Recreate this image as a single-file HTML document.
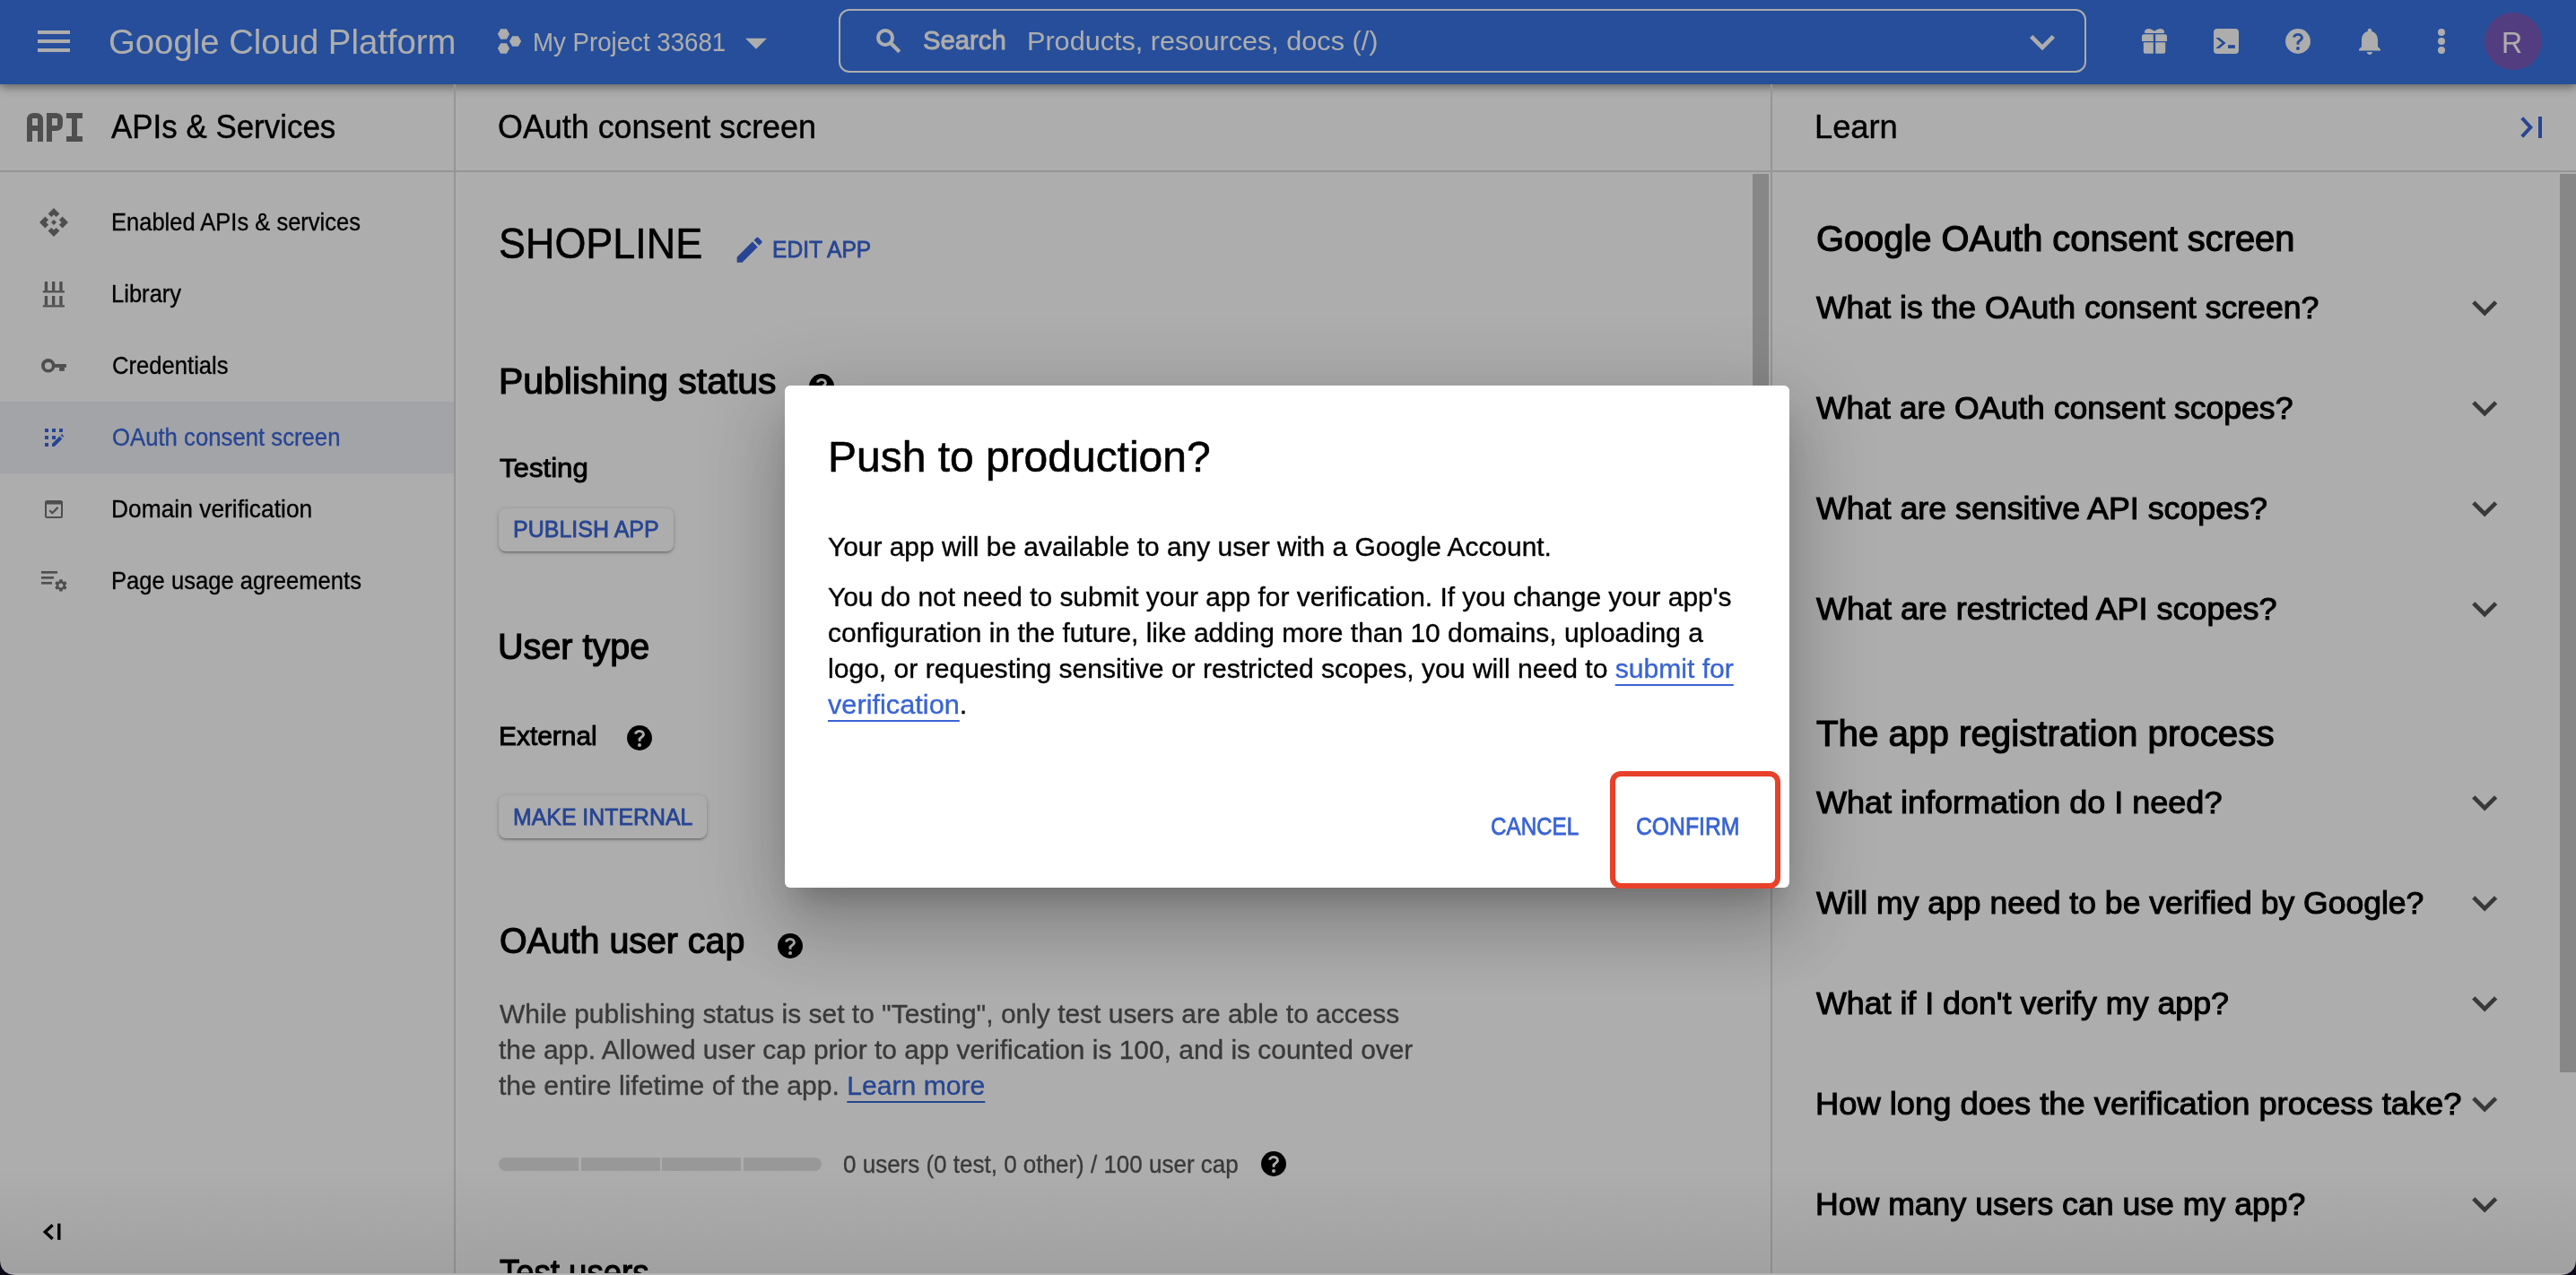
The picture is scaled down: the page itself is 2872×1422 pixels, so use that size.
<!DOCTYPE html>
<html><head><meta charset="utf-8"><style>
html,body{margin:0;padding:0;width:2872px;height:1422px;overflow:hidden;background:#fff;}
body{position:relative;font-family:"Liberation Sans",sans-serif;}
.t{position:absolute;white-space:nowrap;transform-origin:0 50%;}
.ic{position:absolute;overflow:visible;}
.bar{position:absolute;}
#hdr{position:absolute;left:0;top:0;width:2872px;height:94px;background:#3874e4;box-shadow:0 3px 10px rgba(0,0,0,0.45);z-index:0}
#sbox{position:absolute;left:935.4px;top:10.4px;width:1390.6px;height:71px;box-sizing:border-box;border:2.2px solid #ffffff;border-radius:12px;}
.btn{position:absolute;background:#fff;border-radius:8px;box-shadow:0 2px 2px rgba(0,0,0,0.14),0 3px 1px -2px rgba(0,0,0,0.12),0 1px 5px rgba(0,0,0,0.2);}
.lk{color:#3a66d8;-webkit-text-stroke-color:#3a66d8;text-decoration:underline;text-decoration-thickness:2px;text-underline-offset:7px;}
.lk2{color:#3a64d4;-webkit-text-stroke-color:#3a64d4;text-decoration:underline;text-decoration-thickness:2px;text-underline-offset:7px;}
#scrim{position:absolute;left:0;top:0;width:2872px;height:1422px;background:rgba(0,0,0,0.32);}
#dlg{position:absolute;left:875px;top:430px;width:1120px;height:560px;background:#fff;border-radius:6px;
 box-shadow:0 22px 30px -14px rgba(0,0,0,.2),0 48px 76px 6px rgba(0,0,0,.14),0 18px 92px 16px rgba(0,0,0,.12);}
#vig{position:absolute;left:0;top:1300px;width:2872px;height:120px;background:linear-gradient(to bottom,rgba(0,0,0,0),rgba(0,0,0,0.07));}
#strip{position:absolute;left:0;top:1420px;width:2872px;height:2px;background:#b4b4b4;}
#corners{position:absolute;left:0;top:0;}
#redbox{position:absolute;left:1795px;top:859.6px;width:189.7px;height:131px;box-sizing:border-box;border:6px solid #e8412a;border-radius:12px;}
</style></head><body>
<div id="page">
<div id="hdr"></div>
<div class="bar" style="left:42px;top:34px;width:36px;height:4px;background:#fff"></div>
<div class="bar" style="left:42px;top:44px;width:36px;height:4px;background:#fff"></div>
<div class="bar" style="left:42px;top:54px;width:36px;height:4px;background:#fff"></div>
<svg class="ic" style="left:550px;top:28px;width:36px;height:36px" viewBox="550 28 36 36"><polygon fill="#fff" points="568.10,38.00 564.80,43.72 558.20,43.72 554.90,38.00 558.20,32.28 564.80,32.28"/><polygon fill="#fff" points="581.10,46.00 577.80,51.72 571.20,51.72 567.90,46.00 571.20,40.28 577.80,40.28"/><polygon fill="#fff" points="568.10,54.00 564.80,59.72 558.20,59.72 554.90,54.00 558.20,48.28 564.80,48.28"/></svg>
<svg class="ic" style="left:828px;top:40px;width:30px;height:18px" viewBox="828 40 30 18"><polygon fill="#fff" points="831,42.8 855,42.8 843,54.8"/></svg>
<div id="sbox"></div>
<svg class="ic" style="left:970px;top:26px;width:40px;height:40px" viewBox="970 26 40 40"><g stroke="#fff" fill="none"><circle cx="987" cy="42" r="8" stroke-width="4"/><path d="M992.5 47.5L1002.8 57.8" stroke-width="4.2"/></g></svg>
<svg class="ic" style="left:2249.0px;top:18.5px;width:56.0px;height:56.0px" viewBox="0 0 24 24"><path fill="#fff" d="M16.59 8.59L12 13.17 7.41 8.59 6 10l6 6 6-6z"/></svg>
<svg class="ic" style="left:2380px;top:26px;width:44px;height:40px" viewBox="2380 26 44 40"><path fill="#fff" d="M2391 35.5c0-2.2 2.2-3.5 4.5-3.5 2.3 0 4.5 1.5 6.5 2.8 2-1.3 4.2-2.8 6.5-2.8 2.3 0 4.5 1.3 4.5 3.5 0 1.2-.5 1.5-1 1.5h-20c-.5 0-1-.3-1-1.5z"/><path fill="#fff" d="M2388 45.9V40.8Q2388 38.3 2390.5 38.3H2400.8V45.9Z"/><path fill="#fff" d="M2403.2 38.3H2413.5Q2416 38.3 2416 40.8V45.9H2403.2Z"/><path fill="#fff" d="M2389.8 47.2h11v12.5h-9c-1.1 0-2-.9-2-2z"/><path fill="#fff" d="M2403.2 47.2h11v10.5c0 1.1-.9 2-2 2h-9z"/></svg>
<svg class="ic" style="left:2464px;top:28px;width:36px;height:36px" viewBox="2464 28 36 36"><rect fill="#fff" x="2468" y="32" width="28" height="28" rx="4"/><polygon fill="#3a6ed8" points="2470.2,41.9 2474.2,41.9 2481.6,47.9 2474.2,53.9 2470.2,53.9 2477.4,47.9"/><rect fill="#3a6ed8" x="2484" y="50.2" width="7.9" height="3.7"/></svg>
<svg class="ic" style="left:2548.0px;top:32.0px;width:28px;height:28px" viewBox="-14 -14 28 28"><defs><mask id="hm1" maskUnits="userSpaceOnUse" x="-14" y="-14" width="28" height="28"><rect x="-14" y="-14" width="28" height="28" fill="#fff"/><path d="M-4.45 -4.3A4.45 3.5 0 1 1 3.75 -2.2L0.05 1.2V3.7" fill="none" stroke="#000" stroke-width="2.9"/><circle cx="0" cy="8" r="2.05" fill="#000"/></mask></defs><circle cx="0" cy="0" r="13.95" fill="#fff" mask="url(#hm1)"/></svg>
<svg class="ic" style="left:2624px;top:28.25px;width:36px;height:36px" viewBox="0 0 24 24"><path fill="#fff" d="M12 22c1.1 0 2-.9 2-2h-4c0 1.1.89 2 2 2zm6-6v-5c0-3.07-1.64-5.64-4.5-6.32V4c0-.83-.67-1.5-1.5-1.5s-1.5.67-1.5 1.5v.68C7.63 5.36 6 7.92 6 11v5l-2 2v1h16v-1l-2-2z"/></svg>
<div class="bar" style="left:2718px;top:32px;width:8px;height:8px;border-radius:50%;background:#fff"></div>
<div class="bar" style="left:2718px;top:42px;width:8px;height:8px;border-radius:50%;background:#fff"></div>
<div class="bar" style="left:2718px;top:52px;width:8px;height:8px;border-radius:50%;background:#fff"></div>
<div class="bar" style="left:2770px;top:14px;width:64px;height:64px;border-radius:50%;background:#7b5bbf"></div>
<div id="side"></div>
<div class="bar" style="left:0;top:190px;width:506px;height:2px;background:#dcdcdc"></div>
<div class="bar" style="left:506px;top:94px;width:2px;height:1328px;background:#dcdcdc"></div>
<div class="bar" style="left:0;top:448px;width:506px;height:80px;background:#f0f2f8"></div>
<svg class="ic" style="left:28px;top:124px;width:66px;height:36px" viewBox="28 124 66 36"><path fill="#747474" fill-rule="evenodd" d="M30 158V134q0-8 8-8h2q8 0 8 8v24h-6v-12h-6v12zM36 132v8h6v-8zM52 158v-32h10q8 0 8 8v4q0 8-8 8h-4v12zM58 132v8h6v-8zM74 126h18v6h-6v20h6v6h-18v-6h6v-20h-6z"/></svg>
<svg class="ic" style="left:40px;top:228px;width:40px;height:40px" viewBox="40 228 40 40"><g fill="#737373"><polygon points="60.00,232.00 66.40,238.40 62.70,242.10 60.00,239.40 57.30,242.10 53.60,238.40"/><polygon points="76.00,248.00 69.60,254.40 65.90,250.70 68.60,248.00 65.90,245.30 69.60,241.60"/><polygon points="60.00,264.00 53.60,257.60 57.30,253.90 60.00,256.60 62.70,253.90 66.40,257.60"/><polygon points="44.00,248.00 50.40,241.60 54.10,245.30 51.40,248.00 54.10,250.70 50.40,254.40"/><polygon points="60,245 63,248 60,251 57,248"/></g></svg>
<svg class="ic" style="left:40px;top:308px;width:40px;height:40px" viewBox="40 308 40 40"><g fill="#737373"><rect x="49.8" y="314" width="3.3" height="10.2"/><rect x="58" y="314" width="3.3" height="10.2"/><rect x="66.3" y="314" width="3.3" height="10.2"/><rect x="47.8" y="324.2" width="24.2" height="2.2"/><rect x="49.8" y="330" width="3.3" height="10.3"/><rect x="58" y="330" width="3.3" height="10.3"/><rect x="66.3" y="330" width="3.3" height="10.3"/><rect x="47.8" y="340.3" width="24.2" height="2.2"/></g></svg>
<svg class="ic" style="left:40px;top:392px;width:40px;height:32px" viewBox="40 392 40 32"><g fill="#737373"><path fill-rule="evenodd" d="M53.75 400.1a7.75 7.75 0 1 1 0 15.5a7.75 7.75 0 1 1 0-15.5zM53.85 403.9a4 4 0 1 0 0 8a4 4 0 1 0 0-8z"/><rect x="60" y="406.05" width="13.9" height="3.8"/><rect x="66.1" y="409.5" width="5.8" height="4.3"/></g></svg>
<svg class="ic" style="left:44px;top:472px;width:32px;height:32px" viewBox="44 472 32 32"><g fill="#3a66d8"><rect x="50" y="478" width="4" height="4"/><rect x="58" y="478" width="4" height="4"/><rect x="66" y="478" width="4" height="4"/><rect x="50" y="486" width="4" height="4"/><rect x="58" y="486" width="4" height="4"/><rect x="50" y="494" width="4" height="4"/><polygon points="58,498 58,495 66.4,486.6 69.3,489.5 60.8,498"/><polygon points="67.6,485.4 68.9,484.1 71.3,486.5 70,487.8"/></g></svg>
<svg class="ic" style="left:44px;top:552px;width:32px;height:32px" viewBox="44 552 32 32"><g fill="none" stroke="#737373"><rect x="51" y="559" width="18" height="18" rx="1.5" stroke-width="2"/><path d="M50 561h20" stroke-width="3"/><path d="M55.3 569.2l3 3 6.3-6.3" stroke-width="2.3"/></g></svg>
<svg class="ic" style="left:40px;top:630px;width:40px;height:40px" viewBox="40 630 40 40"><g fill="#737373"><rect x="46" y="637" width="18" height="2.6"/><rect x="46" y="643" width="14" height="2.6"/><rect x="46" y="649" width="12" height="2.6"/><g transform="translate(59.5 644.5) scale(0.7)"><path d="M19.14 12.94c.04-.3.06-.61.06-.94 0-.32-.02-.64-.07-.94l2.03-1.58c.18-.14.23-.41.12-.61l-1.92-3.32c-.12-.22-.37-.29-.59-.22l-2.39.96c-.5-.38-1.03-.7-1.62-.94l-.36-2.54c-.04-.24-.24-.41-.48-.41h-3.84c-.24 0-.43.17-.47.41l-.36 2.54c-.59.24-1.13.57-1.62.94l-2.39-.96c-.22-.08-.47 0-.59.22L2.74 8.87c-.12.21-.08.47.12.61l2.03 1.58c-.05.3-.09.63-.09.94s.02.64.07.94l-2.03 1.58c-.18.14-.23.41-.12.61l1.92 3.32c.12.22.37.29.59.22l2.39-.96c.5.38 1.03.7 1.62.94l.36 2.54c.05.24.24.41.48.41h3.84c.24 0 .44-.17.47-.41l.36-2.54c.59-.24 1.13-.56 1.62-.94l2.39.96c.22.08.47 0 .59-.22l1.92-3.32c.12-.22.07-.47-.12-.61l-2.01-1.58zM12 15.6c-1.98 0-3.6-1.62-3.6-3.6s1.62-3.6 3.6-3.6 3.6 1.62 3.6 3.6-1.62 3.6-3.6 3.6z"/></g></g></svg>
<svg class="ic" style="left:44px;top:1360px;width:30px;height:28px" viewBox="44 1360 30 28"><polyline points="58.6,1366.2 50.3,1374 58.6,1381.8" fill="none" stroke="#000" stroke-width="3.4"/><rect fill="#000" x="64.1" y="1364.6" width="3.4" height="18.2"/></svg>
<div class="bar" style="left:508px;top:190px;width:2364px;height:2px;background:#dcdcdc"></div>
<div class="bar" style="left:1974px;top:94px;width:2px;height:1328px;background:#dcdcdc"></div>
<div class="bar" style="left:1954px;top:194px;width:18px;height:700px;background:#c8c8c8"></div>
<div class="bar" style="left:2854px;top:194px;width:18px;height:1002px;background:#c8c8c8"></div>
<svg class="ic" style="left:817.3px;top:260.3px;width:37.3px;height:37.3px" viewBox="0 0 24 24"><path fill="#3a66d8" d="M3 17.25V21h3.75L17.81 9.94l-3.75-3.75L3 17.25zM20.71 7.04c.39-.39.39-1.02 0-1.41l-2.34-2.34c-.39-.39-1.02-.39-1.41 0l-1.83 1.83 3.75 3.75 1.83-1.83z"/></svg>
<svg class="ic" style="left:902.0px;top:416.8px;width:28px;height:28px" viewBox="-14 -14 28 28"><defs><mask id="hm2" maskUnits="userSpaceOnUse" x="-14" y="-14" width="28" height="28"><rect x="-14" y="-14" width="28" height="28" fill="#fff"/><path d="M-4.45 -4.3A4.45 3.5 0 1 1 3.75 -2.2L0.05 1.2V3.7" fill="none" stroke="#000" stroke-width="2.9"/><circle cx="0" cy="8" r="2.05" fill="#000"/></mask></defs><circle cx="0" cy="0" r="13.95" fill="#000000" mask="url(#hm2)"/></svg>
<svg class="ic" style="left:699.0px;top:809.0px;width:28px;height:28px" viewBox="-14 -14 28 28"><defs><mask id="hm3" maskUnits="userSpaceOnUse" x="-14" y="-14" width="28" height="28"><rect x="-14" y="-14" width="28" height="28" fill="#fff"/><path d="M-4.45 -4.3A4.45 3.5 0 1 1 3.75 -2.2L0.05 1.2V3.7" fill="none" stroke="#000" stroke-width="2.9"/><circle cx="0" cy="8" r="2.05" fill="#000"/></mask></defs><circle cx="0" cy="0" r="13.95" fill="#000000" mask="url(#hm3)"/></svg>
<svg class="ic" style="left:867.0px;top:1041.0px;width:28px;height:28px" viewBox="-14 -14 28 28"><defs><mask id="hm4" maskUnits="userSpaceOnUse" x="-14" y="-14" width="28" height="28"><rect x="-14" y="-14" width="28" height="28" fill="#fff"/><path d="M-4.45 -4.3A4.45 3.5 0 1 1 3.75 -2.2L0.05 1.2V3.7" fill="none" stroke="#000" stroke-width="2.9"/><circle cx="0" cy="8" r="2.05" fill="#000"/></mask></defs><circle cx="0" cy="0" r="13.95" fill="#000000" mask="url(#hm4)"/></svg>
<svg class="ic" style="left:1406.0px;top:1284.3px;width:28px;height:28px" viewBox="-14 -14 28 28"><defs><mask id="hm5" maskUnits="userSpaceOnUse" x="-14" y="-14" width="28" height="28"><rect x="-14" y="-14" width="28" height="28" fill="#fff"/><path d="M-4.45 -4.3A4.45 3.5 0 1 1 3.75 -2.2L0.05 1.2V3.7" fill="none" stroke="#000" stroke-width="2.9"/><circle cx="0" cy="8" r="2.05" fill="#000"/></mask></defs><circle cx="0" cy="0" r="13.95" fill="#000000" mask="url(#hm5)"/></svg>
<div class="btn" style="left:556px;top:567px;width:195px;height:48px"></div>
<div class="btn" style="left:556px;top:887px;width:232px;height:48px"></div>
<div class="bar" style="left:556px;top:1291.4px;width:359.7px;height:15px;border-radius:7.5px;background:#e1e1e1;overflow:hidden"><div class="bar" style="left:89.4px;top:0;width:2.2px;height:15px;background:#fff"></div><div class="bar" style="left:179.7px;top:0;width:2.2px;height:15px;background:#fff"></div><div class="bar" style="left:270.4px;top:0;width:2.2px;height:15px;background:#fff"></div></div>
<svg class="ic" style="left:2806px;top:126px;width:34px;height:34px" viewBox="2806 126 34 34"><polyline points="2811.8,131.6 2821.3,142 2811.8,152.4" fill="none" stroke="#3a66d8" stroke-width="4"/><rect fill="#3a66d8" x="2830" y="130" width="4" height="24"/></svg>
<svg class="ic" style="left:2741.7px;top:314.6px;width:56.4px;height:56.4px" viewBox="0 0 24 24"><path fill="#555555" d="M16.59 8.59L12 13.17 7.41 8.59 6 10l6 6 6-6z"/></svg>
<svg class="ic" style="left:2741.7px;top:426.6px;width:56.4px;height:56.4px" viewBox="0 0 24 24"><path fill="#555555" d="M16.59 8.59L12 13.17 7.41 8.59 6 10l6 6 6-6z"/></svg>
<svg class="ic" style="left:2741.7px;top:538.6px;width:56.4px;height:56.4px" viewBox="0 0 24 24"><path fill="#555555" d="M16.59 8.59L12 13.17 7.41 8.59 6 10l6 6 6-6z"/></svg>
<svg class="ic" style="left:2741.7px;top:650.6px;width:56.4px;height:56.4px" viewBox="0 0 24 24"><path fill="#555555" d="M16.59 8.59L12 13.17 7.41 8.59 6 10l6 6 6-6z"/></svg>
<svg class="ic" style="left:2741.7px;top:866.6px;width:56.4px;height:56.4px" viewBox="0 0 24 24"><path fill="#555555" d="M16.59 8.59L12 13.17 7.41 8.59 6 10l6 6 6-6z"/></svg>
<svg class="ic" style="left:2741.7px;top:978.6px;width:56.4px;height:56.4px" viewBox="0 0 24 24"><path fill="#555555" d="M16.59 8.59L12 13.17 7.41 8.59 6 10l6 6 6-6z"/></svg>
<svg class="ic" style="left:2741.7px;top:1090.6px;width:56.4px;height:56.4px" viewBox="0 0 24 24"><path fill="#555555" d="M16.59 8.59L12 13.17 7.41 8.59 6 10l6 6 6-6z"/></svg>
<svg class="ic" style="left:2741.7px;top:1202.6px;width:56.4px;height:56.4px" viewBox="0 0 24 24"><path fill="#555555" d="M16.59 8.59L12 13.17 7.41 8.59 6 10l6 6 6-6z"/></svg>
<svg class="ic" style="left:2741.7px;top:1314.6px;width:56.4px;height:56.4px" viewBox="0 0 24 24"><path fill="#555555" d="M16.59 8.59L12 13.17 7.41 8.59 6 10l6 6 6-6z"/></svg>
<div class="t" id="t0" style="left:121.1px;top:28.0px;font-size:38.5px;line-height:38.5px;color:#ffffff;transform:scaleX(0.9948);">Google Cloud Platform</div>
<div class="t" id="t1" style="left:593.7px;top:33.0px;font-size:29px;line-height:29px;color:#ffffff;transform:scaleX(0.9533);">My Project 33681</div>
<div class="t" id="t2" style="left:1028.9px;top:30.0px;font-size:30px;line-height:30px;color:#ffffff;-webkit-text-stroke:0.90px #ffffff;transform:scaleX(0.9760);">Search</div>
<div class="t" id="t3" style="left:1144.5px;top:31.0px;font-size:30px;line-height:30px;color:#ffffff;transform:scaleX(1.0206);">Products, resources, docs (/)</div>
<div class="t" id="t4" style="left:2789.4px;top:30.0px;font-size:34px;line-height:34px;color:#ffffff;transform:scaleX(0.9432);">R</div>
<div class="t" id="t5" style="left:123.9px;top:124.0px;font-size:36px;line-height:36px;color:#000000;-webkit-text-stroke:0.43px #000000;transform:scaleX(0.9697);">APIs &amp; Services</div>
<div class="t" id="t6" style="left:123.9px;top:234.0px;font-size:28px;line-height:28px;color:#000000;-webkit-text-stroke:0.34px #000000;transform:scaleX(0.9113);">Enabled APIs &amp; services</div>
<div class="t" id="t7" style="left:123.9px;top:314.0px;font-size:28px;line-height:28px;color:#000000;-webkit-text-stroke:0.34px #000000;transform:scaleX(0.9131);">Library</div>
<div class="t" id="t8" style="left:124.7px;top:394.0px;font-size:28px;line-height:28px;color:#000000;-webkit-text-stroke:0.34px #000000;transform:scaleX(0.9150);">Credentials</div>
<div class="t" id="t9" style="left:124.8px;top:474.0px;font-size:28px;line-height:28px;color:#3a66d8;-webkit-text-stroke:0.34px #3a66d8;transform:scaleX(0.9185);">OAuth consent screen</div>
<div class="t" id="t10" style="left:123.8px;top:554.0px;font-size:28px;line-height:28px;color:#000000;-webkit-text-stroke:0.34px #000000;transform:scaleX(0.9418);">Domain verification</div>
<div class="t" id="t11" style="left:123.9px;top:634.0px;font-size:28px;line-height:28px;color:#000000;-webkit-text-stroke:0.34px #000000;transform:scaleX(0.9144);">Page usage agreements</div>
<div class="t" id="t12" style="left:554.8px;top:124.0px;font-size:36px;line-height:36px;color:#000000;-webkit-text-stroke:0.43px #000000;transform:scaleX(0.9964);">OAuth consent screen</div>
<div class="t" id="t13" style="left:555.8px;top:248.0px;font-size:48px;line-height:48px;color:#000000;-webkit-text-stroke:0.58px #000000;transform:scaleX(0.9356);">SHOPLINE</div>
<div class="t" id="t14" style="left:860.7px;top:265.0px;font-size:26px;line-height:26px;color:#3a66d8;-webkit-text-stroke:0.78px #3a66d8;transform:scaleX(0.9454);">EDIT APP</div>
<div class="t" id="t15" style="left:556.0px;top:405.0px;font-size:40px;line-height:40px;color:#000000;-webkit-text-stroke:1.20px #000000;transform:scaleX(1.0235);">Publishing status</div>
<div class="t" id="t16" style="left:557.2px;top:507.0px;font-size:30px;line-height:30px;color:#000000;-webkit-text-stroke:0.90px #000000;transform:scaleX(1.0392);">Testing</div>
<div class="t" id="t17" style="left:571.9px;top:577.0px;font-size:26px;line-height:26px;color:#3a66d8;-webkit-text-stroke:0.78px #3a66d8;transform:scaleX(0.9623);">PUBLISH APP</div>
<div class="t" id="t18" style="left:555.4px;top:701.0px;font-size:40px;line-height:40px;color:#000000;-webkit-text-stroke:1.20px #000000;transform:scaleX(0.9886);">User type</div>
<div class="t" id="t19" style="left:555.8px;top:806.0px;font-size:30px;line-height:30px;color:#000000;-webkit-text-stroke:0.90px #000000;transform:scaleX(0.9972);">External</div>
<div class="t" id="t20" style="left:571.6px;top:898.0px;font-size:26px;line-height:26px;color:#3a66d8;-webkit-text-stroke:0.78px #3a66d8;transform:scaleX(0.9563);">MAKE INTERNAL</div>
<div class="t" id="t21" style="left:556.7px;top:1029.0px;font-size:40px;line-height:40px;color:#000000;-webkit-text-stroke:1.20px #000000;transform:scaleX(0.9832);">OAuth user cap</div>
<div class="t" id="t22" style="left:556.8px;top:1116.0px;font-size:30px;line-height:30px;color:#555555;-webkit-text-stroke:0.36px #555555;transform:scaleX(0.9982);">While publishing status is set to "Testing", only test users are able to access</div>
<div class="t" id="t23" style="left:556.1px;top:1156.0px;font-size:30px;line-height:30px;color:#555555;-webkit-text-stroke:0.36px #555555;transform:scaleX(0.9971);">the app. Allowed user cap prior to app verification is 100, and is counted over</div>
<div class="t" id="t24" style="left:556.0px;top:1196.0px;font-size:30px;line-height:30px;color:#555555;-webkit-text-stroke:0.36px #555555;transform:scaleX(1.0036);">the entire lifetime of the app. <span class="lk">Learn more</span></div>
<div class="t" id="t25" style="left:939.7px;top:1285.0px;font-size:28px;line-height:28px;color:#555555;-webkit-text-stroke:0.34px #555555;transform:scaleX(0.9284);">0 users (0 test, 0 other) / 100 user cap</div>
<div class="t" id="t26" style="left:557.3px;top:1399.0px;font-size:40px;line-height:40px;color:#000000;-webkit-text-stroke:1.20px #000000;transform:scaleX(0.9128);">Test users</div>
<div class="t" id="t27" style="left:2022.5px;top:124.0px;font-size:36px;line-height:36px;color:#000000;-webkit-text-stroke:0.43px #000000;transform:scaleX(1.0075);">Learn</div>
<div class="t" id="t28" style="left:2024.6px;top:246.0px;font-size:40px;line-height:40px;color:#000000;-webkit-text-stroke:1.20px #000000;transform:scaleX(0.9953);">Google OAuth consent screen</div>
<div class="t" id="t29" style="left:2025.3px;top:325.0px;font-size:35px;line-height:35px;color:#000000;-webkit-text-stroke:1.05px #000000;transform:scaleX(1.0178);">What is the OAuth consent screen?</div>
<div class="t" id="t30" style="left:2025.3px;top:437.0px;font-size:35px;line-height:35px;color:#000000;-webkit-text-stroke:1.05px #000000;transform:scaleX(1.0154);">What are OAuth consent scopes?</div>
<div class="t" id="t31" style="left:2025.3px;top:549.0px;font-size:35px;line-height:35px;color:#000000;-webkit-text-stroke:1.05px #000000;transform:scaleX(1.0217);">What are sensitive API scopes?</div>
<div class="t" id="t32" style="left:2025.3px;top:661.0px;font-size:35px;line-height:35px;color:#000000;-webkit-text-stroke:1.05px #000000;transform:scaleX(1.0270);">What are restricted API scopes?</div>
<div class="t" id="t33" style="left:2025.3px;top:877.0px;font-size:35px;line-height:35px;color:#000000;-webkit-text-stroke:1.05px #000000;transform:scaleX(1.0289);">What information do I need?</div>
<div class="t" id="t34" style="left:2025.3px;top:989.0px;font-size:35px;line-height:35px;color:#000000;-webkit-text-stroke:1.05px #000000;transform:scaleX(1.0151);">Will my app need to be verified by Google?</div>
<div class="t" id="t35" style="left:2025.3px;top:1101.0px;font-size:35px;line-height:35px;color:#000000;-webkit-text-stroke:1.05px #000000;transform:scaleX(1.0218);">What if I don't verify my app?</div>
<div class="t" id="t36" style="left:2024.0px;top:1213.0px;font-size:35px;line-height:35px;color:#000000;-webkit-text-stroke:1.05px #000000;transform:scaleX(1.0373);">How long does the verification process take?</div>
<div class="t" id="t37" style="left:2024.1px;top:1325.0px;font-size:35px;line-height:35px;color:#000000;-webkit-text-stroke:1.05px #000000;transform:scaleX(1.0176);">How many users can use my app?</div>
<div class="t" id="t38" style="left:2024.7px;top:798.0px;font-size:40px;line-height:40px;color:#000000;-webkit-text-stroke:1.20px #000000;transform:scaleX(1.0071);">The app registration process</div>
</div>
<div id="scrim"></div>
<div id="dlg"></div><div id="redbox"></div><div class="t" id="t39" style="left:923.0px;top:486.0px;font-size:48px;line-height:48px;color:#000000;-webkit-text-stroke:0.58px #000000;transform:scaleX(0.9992);">Push to production?</div>
<div class="t" id="t40" style="left:922.5px;top:595.0px;font-size:30px;line-height:30px;color:#000000;-webkit-text-stroke:0.36px #000000;transform:scaleX(0.9969);">Your app will be available to any user with a Google Account.</div>
<div class="t" id="t41" style="left:922.5px;top:651.0px;font-size:30px;line-height:30px;color:#000000;-webkit-text-stroke:0.36px #000000;transform:scaleX(0.9972);">You do not need to submit your app for verification. If you change your app's</div>
<div class="t" id="t42" style="left:922.7px;top:691.0px;font-size:30px;line-height:30px;color:#000000;-webkit-text-stroke:0.36px #000000;transform:scaleX(0.9985);">configuration in the future, like adding more than 10 domains, uploading a</div>
<div class="t" id="t43" style="left:923.1px;top:731.0px;font-size:30px;line-height:30px;color:#000000;-webkit-text-stroke:0.36px #000000;transform:scaleX(1.0026);">logo, or requesting sensitive or restricted scopes, you will need to <span class="lk2">submit for</span></div>
<div class="t" id="t44" style="left:923.4px;top:771.0px;font-size:30px;line-height:30px;color:#000000;-webkit-text-stroke:0.36px #000000;transform:scaleX(1.0238);"><span class="lk2">verification</span>.</div>
<div class="t" id="t45" style="left:1662.2px;top:908.0px;font-size:28px;line-height:28px;color:#3a64d4;-webkit-text-stroke:0.84px #3a64d4;transform:scaleX(0.8645);">CANCEL</div>
<div class="t" id="t46" style="left:1824.2px;top:908.0px;font-size:28px;line-height:28px;color:#3a64d4;-webkit-text-stroke:0.84px #3a64d4;transform:scaleX(0.8838);">CONFIRM</div>
<div id="vig"></div>
<div id="strip"></div>
<svg id="corners" width="2872" height="1422" viewBox="0 0 2872 1422"><path fill="#0b0716" d="M0 1406 Q1 1421 17 1422 H0 Z"/><path fill="#0b0716" d="M2872 1406 Q2871 1421 2855 1422 H2872 Z"/></svg>
</body></html>
